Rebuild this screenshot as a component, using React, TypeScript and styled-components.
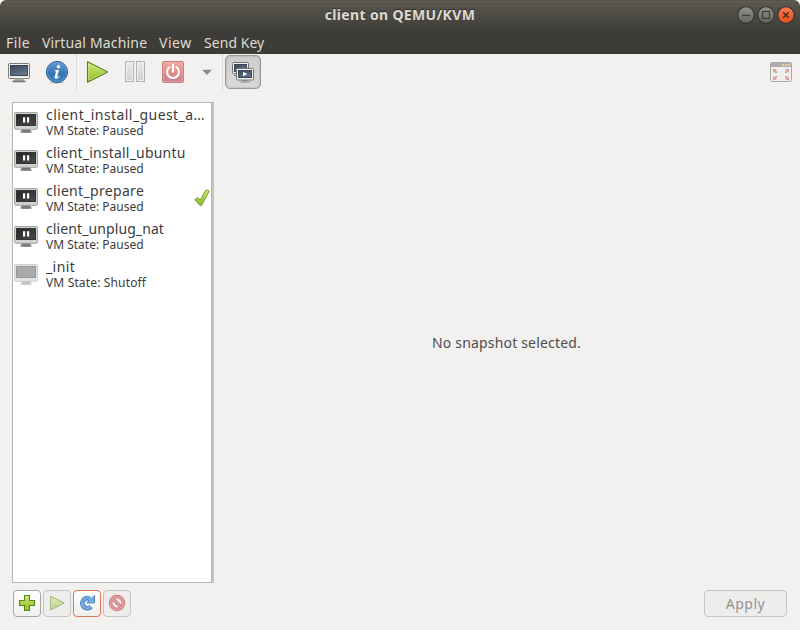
import React from "react";
import styled, { createGlobalStyle } from "styled-components";

const GlobalStyle = createGlobalStyle`
  * { box-sizing: border-box; }
  body { margin: 0; background: #fff; overflow: hidden; }
`;

const Window = styled.div`
  width: 800px;
  height: 630px;
  display: flex;
  flex-direction: column;
  overflow: hidden;
  border-radius: 6px 6px 0 0;
  background: #f2f1f0;
  color: #3c3c3c;
  font-family: "Noto Sans", "Open Sans", sans-serif;
  font-size: 14px;
  white-space: nowrap;
  svg { display: block; flex: none; }
`;

const TitleBar = styled.header`
  height: 30px;
  flex: none;
  display: grid;
  grid-template-columns: 1fr auto 1fr;
  align-items: center;
  padding: 0 5px 0 5px;
  background: linear-gradient(#54524a 0, #54524a 1px, #66645a 1px, #59574e 2px, #3e3d39 100%);
`;

const Title = styled.h1<{ $spacing: number }>`
  grid-column: 2;
  margin: 0;
  color: #dfdbd2;
  font-size: 14px;
  line-height: 30px;
  font-weight: 700;
  letter-spacing: ${(p) => p.$spacing}px;
  text-shadow: 0 -1px #2b2a27;
`;

const WindowControls = styled.div`
  display: flex;
  justify-content: flex-end;
  gap: 2px;
`;

const MenuBar = styled.nav`
  height: 24px;
  flex: none;
  display: flex;
  gap: 12px;
  padding-left: 6px;
  background: #3d3c38;
  color: #dfdbd2;
`;

const MenuItem = styled.span<{ $width: number; $spacing: number }>`
  width: ${(p) => p.$width}px;
  line-height: 25px;
  letter-spacing: ${(p) => p.$spacing}px;
`;

const Toolbar = styled.div`
  height: 48px;
  flex: none;
  display: flex;
  align-items: flex-start;
  padding-right: 7px;
`;

const ToolButton = styled.button<{ $width?: number }>`
  width: ${(p) => p.$width ?? 38}px;
  height: 36px;
  padding: 0;
  border: 0;
  background: none;
  display: flex;
  align-items: center;
  justify-content: center;
`;

const VmActions = styled.div`
  display: flex;
  padding-left: 1px;
`;

const ToggleButton = styled(ToolButton)`
  width: 36px;
  height: 34px;
  margin: 1px 0 0 2px;
  border: 1px solid #989693;
  border-radius: 5px;
  background: linear-gradient(#cecdcc, #dad9d8);
  box-shadow: inset 0 0 2px #999794;
`;

const Separator = styled.div`
  width: 1px;
  height: 36px;
  background: #dddbd8;
`;

const Spacer = styled.div`
  flex: 1;
`;

const Content = styled.main`
  height: 481px;
  flex: none;
  display: flex;
  padding-left: 12px;
`;

const SnapshotList = styled.ul`
  width: 202px;
  margin: 0;
  padding: 0;
  list-style: none;
  background: #fff;
  border: 1px solid #b9b5b0;
  border-right: 2px solid #c5c5c2;
  box-shadow: inset -1px 0 #b3b1ad;
`;

const SnapshotRow = styled.li`
  height: 38px;
  display: flex;
  align-items: center;
  padding: 0 2px 0 1px;
`;

const SnapshotText = styled.div`
  flex: 1;
  min-width: 0;
  padding-left: 8px;
  height: 34px;
`;

const SnapshotName = styled.div<{ $spacing: number }>`
  height: 18px;
  line-height: 19px;
  letter-spacing: ${(p) => p.$spacing}px;
`;

const SnapshotState = styled.div<{ $spacing: number }>`
  font-size: 12px;
  line-height: 16px;
  letter-spacing: ${(p) => p.$spacing}px;
`;

const Details = styled.section`
  flex: 1;
  display: flex;
  align-items: center;
  justify-content: center;
  color: #4d4d4d;
`;

const Message = styled.span<{ $spacing: number }>`
  letter-spacing: ${(p) => p.$spacing}px;
  margin-right: 1px;
`;

const Footer = styled.footer`
  display: flex;
  flex: 1;
  align-items: flex-start;
  gap: 2px;
  padding: 7px 13px 0;
`;

const ActionButton = styled.button<{ $tone?: "normal" | "disabled" | "focus" }>`
  width: 28px;
  height: 27px;
  padding: 0 0 1px;
  display: flex;
  align-items: center;
  justify-content: center;
  border: 1px solid ${(p) => (p.$tone === "focus" ? "#df7554" : p.$tone === "disabled" ? "#c5c4c1" : "#a9a7a4")};
  border-radius: 4px;
  background: ${(p) => (p.$tone === "disabled" ? "#eeedec" : "linear-gradient(#ffffff, #f0efee)")};
`;

const ApplyButton = styled(ActionButton)<{ $spacing: number }>`
  width: 83px;
  padding: 0;
  color: #929292;
  font: 14px "Noto Sans", sans-serif;
  letter-spacing: ${(p) => p.$spacing}px;
`;

function Gradients() {
  return (
    <svg width="0" height="0" aria-hidden>
      <defs>
        <linearGradient id="screen" x1="0" y1="0" x2="0.6" y2="1">
          <stop offset="0" stopColor="#35465d" /><stop offset="1" stopColor="#66758a" />
        </linearGradient>
        <linearGradient id="dark" x1="0" y1="0" x2="1" y2="1">
          <stop offset="0" stopColor="#252525" /><stop offset="1" stopColor="#4b4b4b" />
        </linearGradient>
        <linearGradient id="info" x1="0" y1="0" x2="0" y2="1">
          <stop offset="0" stopColor="#6b9bd0" /><stop offset="0.6" stopColor="#3473b3" /><stop offset="1" stopColor="#3c88c3" />
        </linearGradient>
        <linearGradient id="green" x1="0" y1="0" x2="0" y2="1">
          <stop offset="0" stopColor="#d3e878" /><stop offset="1" stopColor="#91ba25" />
        </linearGradient>
        <linearGradient id="grey" x1="0" y1="0" x2="0" y2="1">
          <stop offset="0" stopColor="#eaebea" /><stop offset="1" stopColor="#ced1cd" />
        </linearGradient>
        <linearGradient id="red" x1="0" y1="0" x2="0" y2="1">
          <stop offset="0" stopColor="#f0aca0" /><stop offset="0.5" stopColor="#e58983" /><stop offset="1" stopColor="#c68196" />
        </linearGradient>
        <linearGradient id="control" x1="0" y1="0" x2="0" y2="1">
          <stop offset="0" stopColor="#92918a" /><stop offset="1" stopColor="#65645e" />
        </linearGradient>
        <linearGradient id="close" x1="0" y1="0" x2="0" y2="1">
          <stop offset="0" stopColor="#f57f58" /><stop offset="1" stopColor="#e64d1c" />
        </linearGradient>
      </defs>
    </svg>
  );
}

const HiddenDefs = styled.div`
  height: 0;
  overflow: hidden;
`;

function ControlIcon({ kind }: { kind: "min" | "max" | "close" }) {
  return (
    <svg width="18" height="18" viewBox="0 0 18 18" fill="none">
      <circle cx="9" cy="9" r="8.2" fill={kind === "close" ? "url(#close)" : "url(#control)"} stroke="#33322e" strokeWidth="1.1" />
      {kind === "min" && <path d="M5 9.5H13" stroke="#3b3a36" strokeWidth="1.2" />}
      {kind === "max" && <rect x="5.5" y="5.5" width="7" height="7" stroke="#3b3a36" strokeWidth="1.2" />}
      {kind === "close" && <path d="M6.2 6.2L11.8 11.8M11.8 6.2L6.2 11.8" stroke="#46281c" strokeWidth="1.5" />}
    </svg>
  );
}

function MonitorIcon() {
  return (
    <svg width="24" height="24" viewBox="0 0 24 24">
      <rect x="1.5" y="3.5" width="21" height="15" rx="1.2" fill="#efefeb" stroke="#7c7d79" />
      <rect x="3.5" y="5.5" width="17" height="10" fill="url(#screen)" stroke="#3b4652" />
      <path d="M8 18.5H16L17.5 21H6.5Z" fill="#aaa" />
      <path d="M5.5 21.5H18.5" stroke="#71726f" strokeWidth="1.3" />
    </svg>
  );
}

function InfoIcon() {
  return (
    <svg width="24" height="24" viewBox="0 0 24 24">
      <ellipse cx="12" cy="22.5" rx="8" ry="1.2" fill="#ccc" />
      <circle cx="12" cy="12" r="10.6" fill="url(#info)" stroke="#2d5f94" />
      <circle cx="12" cy="12" r="9.6" fill="none" stroke="#79a9d8" strokeWidth=".8" opacity=".65" />
      <circle cx="13.5" cy="6.8" r="1.7" fill="#fff" />
      <path d="M9.4 10.4L14 9.8L12.2 16.8Q12.1 17.5 12.8 17.1L14.2 16L14.6 16.5Q12.5 19 10.5 18.7Q9.1 18.4 9.7 16.5L11.1 11.4L9.3 11.1Z" fill="#fff" />
    </svg>
  );
}

function PlayIcon({ size = 24, faded = false }: { size?: number; faded?: boolean }) {
  return (
    <svg width={size} height={size} viewBox="0 0 24 24" opacity={faded ? 0.5 : 1}>
      <path d="M2.5 1.8V22.2L22.7 12Z" fill="url(#green)" stroke="#4d8417" strokeWidth={faded ? 1.6 : 1.1} strokeLinejoin="round" />
      <path d="M3.7 3.7V20.2L20.2 12Z" fill="none" stroke="#dcee91" strokeWidth=".8" opacity=".7" />
    </svg>
  );
}

function PauseIcon() {
  return (
    <svg width="24" height="24" viewBox="0 0 24 24" fill="url(#grey)" stroke="#b2b4b0">
      <rect x="2.5" y="1.5" width="8" height="20" />
      <rect x="13.5" y="1.5" width="8" height="20" />
      <path d="M3.5 2.5H9.5V20.5H3.5ZM14.5 2.5H20.5V20.5H14.5Z" fill="none" stroke="#f3f4f2" strokeWidth=".8" />
    </svg>
  );
}

function PowerIcon() {
  return (
    <svg width="24" height="24" viewBox="0 0 24 24" fill="none">
      <rect x="1.5" y="1.5" width="21" height="21" rx="1.2" fill="url(#red)" stroke="#c67d82" />
      <rect x="2.5" y="2.5" width="19" height="19" stroke="#efb0aa" opacity=".6" />
      <path d="M8.4 7.2A6 6 0 1 0 15.6 7.2" stroke="#fff" strokeWidth="2.2" strokeLinecap="round" />
      <path d="M12 4.7V11.5" stroke="#fff" strokeWidth="2.3" strokeLinecap="round" />
    </svg>
  );
}

function ArrowIcon() {
  return (
    <svg width="12" height="8" viewBox="0 0 12 8">
      <path d="M1 1.7H11L6 7Z" fill="#8e8d89" />
    </svg>
  );
}

function SnapshotsIcon() {
  return (
    <svg width="24" height="24" viewBox="0 0 24 24">
      <rect x="1.5" y="2.5" width="16" height="11" rx="1" fill="#eeeeeb" stroke="#727470" />
      <rect x="3.5" y="4.5" width="12" height="7" fill="url(#screen)" stroke="#394657" />
      <path d="M3 15.5H8" stroke="#737571" />
      <rect x="5.5" y="8.5" width="17" height="11.5" rx="1" fill="#f2f2ef" stroke="#727470" />
      <rect x="7.5" y="10.5" width="13" height="7" fill="url(#screen)" stroke="#394657" />
      <path d="M12 11.8V16.2L16.3 14Z" fill="#fff" />
      <path d="M9.5 22H18.5M12 20.5H16" stroke="#80827e" />
    </svg>
  );
}

function FullscreenIcon() {
  return (
    <svg width="24" height="24" viewBox="0 0 24 24">
      <rect x="1.5" y="2.5" width="21" height="19" rx="1" fill="#efefed" stroke="#aaaaa6" />
      <path d="M2 3H22V7H2Z" fill="#aeadab" />
      <path d="M13 5H15M16 5H18M19 5H21" stroke="#edcf9b" strokeWidth="2" />
      <g fill="#dc9999">
        <path d="M4 9H8L4 13ZM20 9H16L20 13ZM4 20H8L4 16ZM20 20H16L20 16Z" />
        <path d="M6 11H8V13H6ZM16 11H18V13H16ZM6 16H8V18H6ZM16 16H18V18H16Z" />
      </g>
    </svg>
  );
}

function VmIcon({ off }: { off: boolean }) {
  return (
    <svg width="24" height="24" viewBox="0 0 24 24">
      <ellipse cx="12" cy="22" rx="6.2" ry="1" fill={off ? "#ccc" : "#888"} />
      <path d="M8 19H16L17 21.5H7Z" fill={off ? "#bdbdbd" : "#717171"} />
      <rect x=".5" y="2.5" width="23" height="16.8" rx="1.5" fill={off ? "#e4e4e4" : "#d2d2d0"} stroke={off ? "#cfcfcf" : "#a3a3a0"} />
      <rect x="2.5" y="4.5" width="19" height="11" fill={off ? "#a9a9a9" : "url(#dark)"} stroke={off ? "#999" : "#343434"} />
      {!off && <path d="M9 7.2H11.2V12.6H9ZM13 7.2H15.2V12.6H13Z" fill="#fff" />}
    </svg>
  );
}

function CheckIcon() {
  return (
    <svg width="16" height="18" viewBox="0 0 16 18">
      <path d="M.8 10.6L3.8 8.5L6.2 11.4L11.6 1.4Q13.6.5 15.1 2.2L7.6 16.3Q6.5 17.1 5.6 16Z" fill="url(#green)" stroke="#689a28" strokeLinejoin="round" />
    </svg>
  );
}

function AddIcon() {
  return (
    <svg width="18" height="18" viewBox="0 0 18 18">
      <path d="M6.5 1.5H11.5V6.5H16.5V11.5H11.5V16.5H6.5V11.5H1.5V6.5H6.5Z" fill="url(#green)" stroke="#528b18" strokeWidth="1.1" />
    </svg>
  );
}

function RefreshIcon() {
  return (
    <svg width="18" height="18" viewBox="0 0 18 18" fill="none">
      <path d="M13 12.6A5 5 0 1 1 11.8 4.9" stroke="#4a86c0" strokeWidth="4.6" />
      <path d="M16.5 1.3V9H8.6L11 6.6L8.5 4.5H13.6Z" fill="#78afe0" stroke="#4a86c0" strokeWidth=".9" />
      <path d="M12.6 12.8A5 5 0 1 1 12.4 5.2" stroke="#75aadb" strokeWidth="2.8" />
    </svg>
  );
}

function DeleteIcon() {
  return (
    <svg width="18" height="18" viewBox="0 0 18 18" fill="none">
      <circle cx="9" cy="9" r="6.4" stroke="#c9747b" strokeWidth="3.5" />
      <path d="M4.5 4.5L13.5 13.5" stroke="#c9747b" strokeWidth="3.4" />
      <circle cx="9" cy="9" r="6.4" stroke="#e29a9c" strokeWidth="2" />
      <path d="M4.5 4.5L13.5 13.5" stroke="#e29a9c" strokeWidth="2" />
    </svg>
  );
}

const menus = [
  { label: "File", width: 24, spacing: 0.4 },
  { label: "Virtual Machine", width: 105, spacing: 0.17 },
  { label: "View", width: 33, spacing: 0.5 },
  { label: "Send Key", width: 62, spacing: 0.05 },
];

const snapshots = [
  { name: "client_install_guest_a…", state: "Paused", spacing: 0.43, stateSpacing: 0 },
  { name: "client_install_ubuntu", state: "Paused", spacing: 0.2, stateSpacing: 0 },
  { name: "client_prepare", state: "Paused", spacing: 0.32, stateSpacing: 0, current: true },
  { name: "client_unplug_nat", state: "Paused", spacing: 0.1, stateSpacing: 0 },
  { name: "_init", state: "Shutoff", spacing: 0.4, stateSpacing: 0.15 },
];

export default function App() {
  return (
    <Window>
      <GlobalStyle />
      <HiddenDefs><Gradients /></HiddenDefs>
      <TitleBar>
        <Title $spacing={0.34}>client on QEMU/KVM</Title>
        <WindowControls>
          <ControlIcon kind="min" />
          <ControlIcon kind="max" />
          <ControlIcon kind="close" />
        </WindowControls>
      </TitleBar>
      <MenuBar>
        {menus.map((m) => (
          <MenuItem key={m.label} $width={m.width} $spacing={m.spacing}>{m.label}</MenuItem>
        ))}
      </MenuBar>
      <Toolbar>
        <ToolButton aria-label="Console"><MonitorIcon /></ToolButton>
        <ToolButton aria-label="Details"><InfoIcon /></ToolButton>
        <Separator />
        <VmActions>
          <ToolButton aria-label="Run"><PlayIcon /></ToolButton>
          <ToolButton aria-label="Pause"><PauseIcon /></ToolButton>
          <ToolButton aria-label="Shut down"><PowerIcon /></ToolButton>
          <ToolButton aria-label="Shutdown options" $width={30}><ArrowIcon /></ToolButton>
        </VmActions>
        <Separator />
        <ToggleButton aria-label="Snapshots"><SnapshotsIcon /></ToggleButton>
        <Spacer />
        <ToolButton aria-label="Fullscreen" $width={24}><FullscreenIcon /></ToolButton>
      </Toolbar>
      <Content>
        <SnapshotList>
          {snapshots.map((s) => (
            <SnapshotRow key={s.name}>
              <VmIcon off={s.state === "Shutoff"} />
              <SnapshotText>
                <SnapshotName $spacing={s.spacing}>{s.name}</SnapshotName>
                <SnapshotState $spacing={s.stateSpacing}>VM State: {s.state}</SnapshotState>
              </SnapshotText>
              {s.current && <CheckIcon />}
            </SnapshotRow>
          ))}
        </SnapshotList>
        <Details><Message $spacing={0.18}>No snapshot selected.</Message></Details>
      </Content>
      <Footer>
        <ActionButton aria-label="Create snapshot"><AddIcon /></ActionButton>
        <ActionButton aria-label="Run snapshot" $tone="disabled"><PlayIcon size={16} faded /></ActionButton>
        <ActionButton aria-label="Refresh" $tone="focus"><RefreshIcon /></ActionButton>
        <ActionButton aria-label="Delete snapshot" $tone="disabled"><DeleteIcon /></ActionButton>
        <Spacer />
        <ApplyButton $tone="disabled" $spacing={0.5}>Apply</ApplyButton>
      </Footer>
    </Window>
  );
}
